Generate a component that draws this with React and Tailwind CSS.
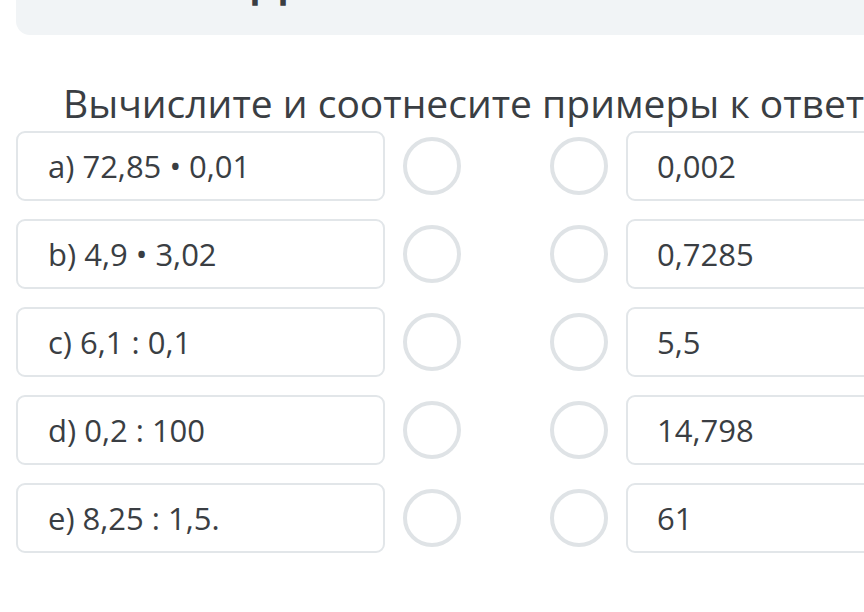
import React from "react";

const rows = [
  { left: "a) 72,85 • 0,01", right: "0,002" },
  { left: "b) 4,9 • 3,02", right: "0,7285" },
  { left: "c) 6,1 : 0,1", right: "5,5" },
  { left: "d) 0,2 : 100", right: "14,798" },
  { left: "e) 8,25 : 1,5.", right: "61" },
];

function Circle() {
  return (
    <div className="w-[58px] h-[58px] shrink-0 rounded-full border-[4px] border-[#dfe3e6] bg-white" />
  );
}

export default function App() {
  return (
    <div
      className="w-[864px] h-[612px] overflow-hidden bg-white text-[#3a3e43]"
      style={{ fontFamily: '"Open Sans", "Noto Sans", sans-serif' }}
    >
      {/* top panel, cut off by the screen edge */}
      <div className="ml-4 h-[35px] w-[860px] rounded-bl-[14px] bg-[#f1f4f6] overflow-hidden relative">
        <div className="absolute left-[236px] top-[-46px] text-[48px] leading-none font-semibold text-[#3a3e43]">
          Д
        </div>
      </div>

      {/* question */}
      <h1 className="mt-[45px] pl-[63px] whitespace-nowrap text-[39px] leading-[45px] font-normal">
        Вычислите и соотнесите примеры к ответам
      </h1>

      {/* matching rows */}
      <div className="mt-[6px] flex flex-col gap-[18px]">
        {rows.map((row) => (
          <div key={row.left} className="flex items-center h-[70px]">
            <div className="ml-4 w-[369px] h-full shrink-0 flex items-center pl-[30px] rounded-[9px] border-2 border-[#e2e6e9] text-[31px]">
              {row.left}
            </div>
            <div className="ml-[18px]">
              <Circle />
            </div>
            <div className="ml-[89px]">
              <Circle />
            </div>
            <div className="ml-[18px] w-[300px] h-full shrink-0 flex items-center pl-[29px] rounded-[9px] border-2 border-[#e2e6e9] text-[31px]">
              {row.right}
            </div>
          </div>
        ))}
      </div>
    </div>
  );
}
